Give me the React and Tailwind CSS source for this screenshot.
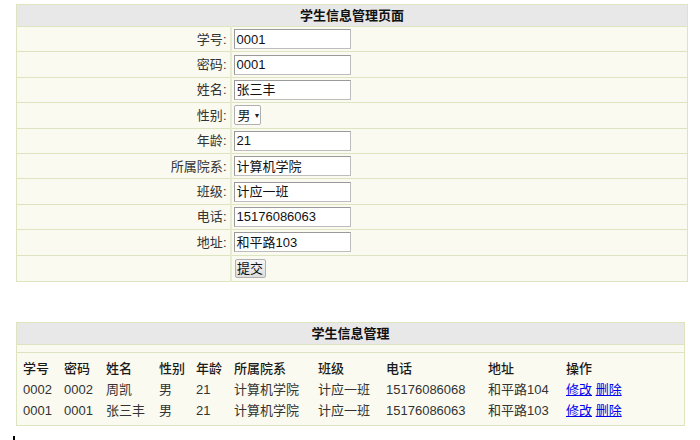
import React from "react"

const fields = [
  { label: "学号", value: "0001" },
  { label: "密码", value: "0001" },
  { label: "姓名", value: "张三丰" },
  { label: "性别", select: "男" },
  { label: "年龄", value: "21" },
  { label: "所属院系", value: "计算机学院" },
  { label: "班级", value: "计应一班" },
  { label: "电话", value: "15176086063" },
  { label: "地址", value: "和平路103" },
]

const students = [
  ["0002", "0002", "周凯", "男", "21", "计算机学院", "计应一班", "15176086068", "和平路104"],
  ["0001", "0001", "张三丰", "男", "21", "计算机学院", "计应一班", "15176086063", "和平路103"],
]

const heads = ["学号", "密码", "姓名", "性别", "年龄", "所属院系", "班级", "电话", "地址", "操作"]
const widths = ["w-[41px]", "w-[42px]", "w-[53px]", "w-[37px]", "w-[38px]", "w-[84px]", "w-[68px]", "w-[102px]", "w-[78px]", ""]

const font = "font-['Liberation_Sans','Noto_Sans_CJK_SC',sans-serif]"

export default function App() {
  return (
    <div className={`w-[700px] h-[440px] overflow-hidden bg-white text-[13px] text-[#333] ${font}`}>
      <table className="ml-4 mt-1 w-[672px] border border-[#dde5c0] bg-[#fafaf0]">
        <tbody>
          <tr className="h-[22px] bg-[#e8e8e8]">
            <th colSpan={2} className="border-b border-[#dde5c0] text-center font-bold text-[#111] leading-none">学生信息管理页面</th>
          </tr>
          {fields.map((f) => (
            <tr key={f.label} className="h-[25.4px] border-b border-[#dde5c0]">
              <td className="w-[214px] border-r-2 border-[#e6ecd0] pr-[3px] text-right leading-none">{f.label}:</td>
              <td className="pl-[2px] leading-none">
                {f.select ? (
                  <div className="flex h-[20px] w-[27px] items-center gap-[3px] rounded-[2px] border border-[#b0b0b0] bg-white pl-[3px] text-[13px] text-[#222]">
                    {f.select}
                    <span className="text-[7px] leading-none">▼</span>
                  </div>
                ) : (
                  <div className="flex h-[20px] w-[117px] items-center border border-[#bdbdbd] border-t-[#9a9a9a] border-l-[#9a9a9a] bg-white pl-[2px] text-[13px] text-[#111]">
                    {f.value}
                  </div>
                )}
              </td>
            </tr>
          ))}
          <tr className="h-[26px]">
            <td className="border-r-2 border-[#e6ecd0]"></td>
            <td className="pl-[3px] leading-none">
              <div className="flex h-[19px] w-[31px] items-center justify-center rounded-[2px] border border-[#b0b0b0] bg-gradient-to-b from-[#f6f6f6] to-[#dedede] text-[13px] text-[#111]">
                提交
              </div>
            </td>
          </tr>
        </tbody>
      </table>

      <table className="ml-4 mt-[40px] w-[669px] border border-[#dde5c0] bg-[#fafaf0]">
        <tbody>
          <tr className="h-[22px] bg-[#e8e8e8]">
            <th className="border-b border-[#dde5c0] text-center font-bold text-[#111] leading-none">学生信息管理</th>
          </tr>
          <tr className="h-[8px] border-b border-[#dde5c0]">
            <td></td>
          </tr>
          <tr>
            <td className="pl-[6px] pt-[5px] pb-[4px]">
              <table>
                <thead>
                  <tr className="h-[21px]">
                    {heads.map((h, i) => (
                      <th key={h} className={`${widths[i]} p-0 text-left font-medium text-[#1a1a1a] leading-none`}>{h}</th>
                    ))}
                  </tr>
                </thead>
                <tbody>
                  {students.map((s) => (
                    <tr key={s[0]} className="h-[21px]">
                      {s.map((v, i) => (
                        <td key={i} className="p-0 leading-none">{v}</td>
                      ))}
                      <td className="p-0 leading-none">
                        <a href="#" className="text-[#0000ee] underline">修改</a>{" "}
                        <a href="#" className="text-[#0000ee] underline">删除</a>
                      </td>
                    </tr>
                  ))}
                </tbody>
              </table>
            </td>
          </tr>
        </tbody>
      </table>

      <div className="ml-[13px] mt-[10px] h-[6px] w-[2px] bg-black"></div>
    </div>
  )
}
